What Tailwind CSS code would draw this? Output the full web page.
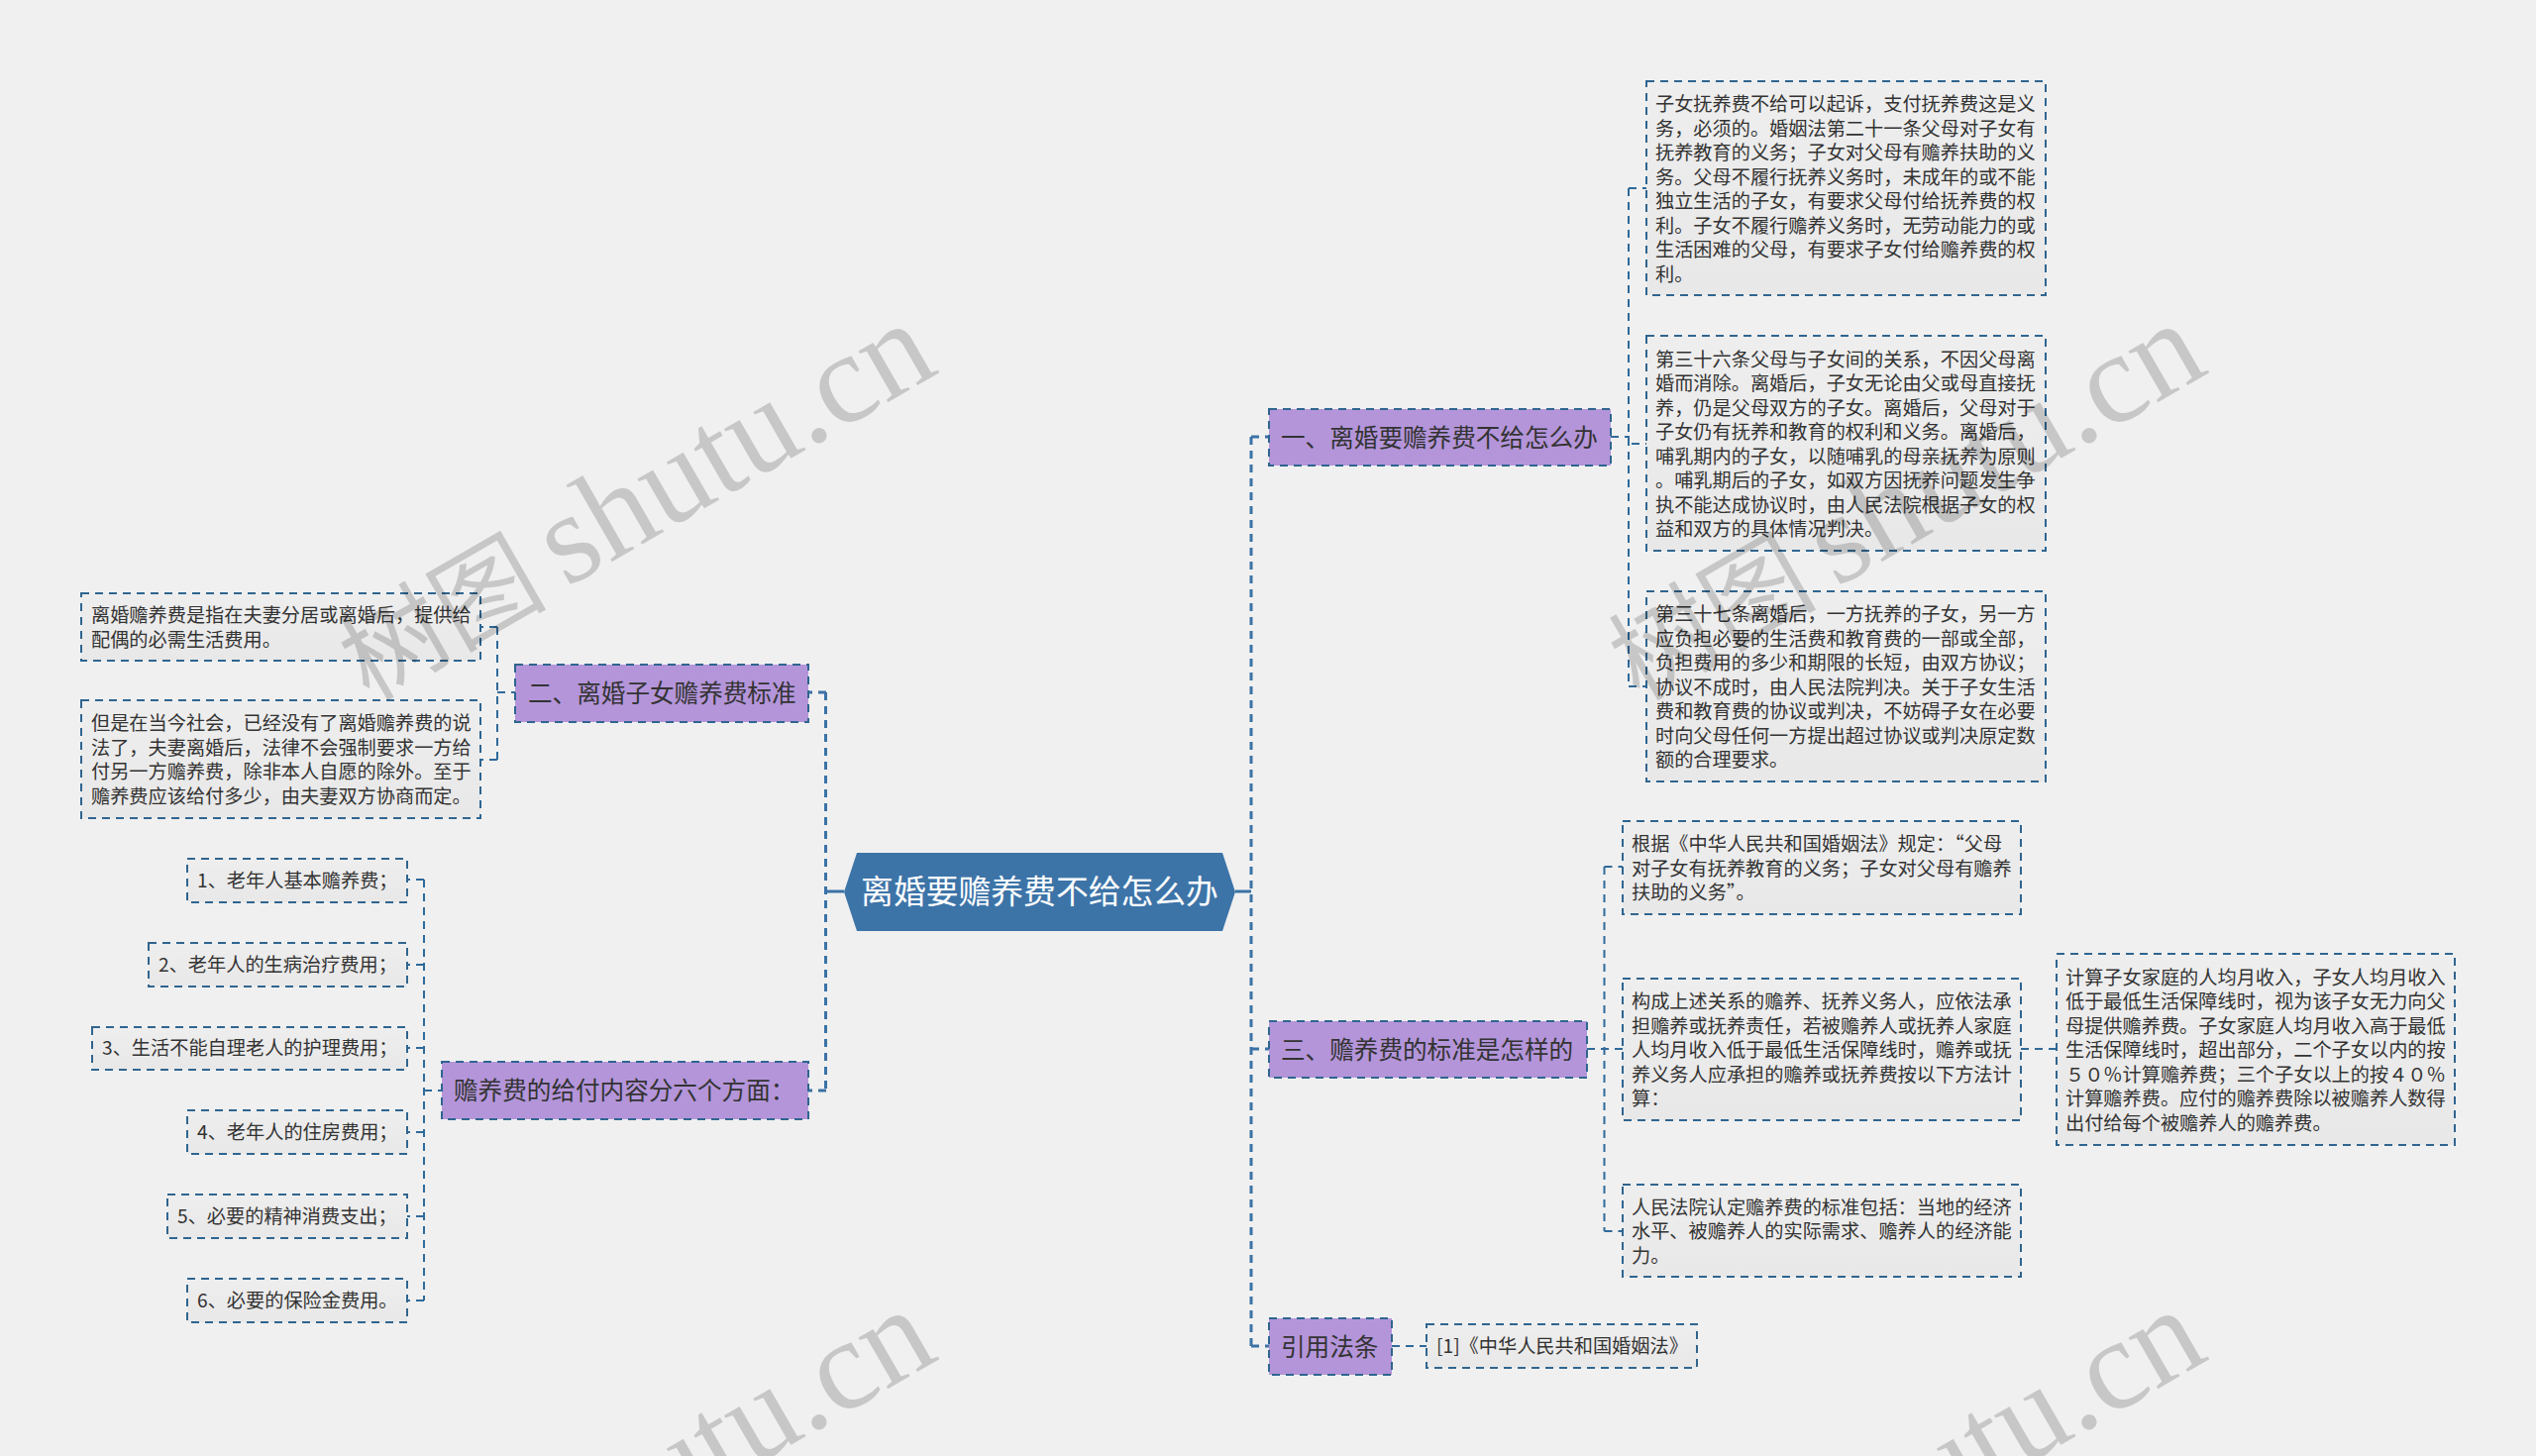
<!DOCTYPE html>
<html lang="zh-CN">
<head>
    <meta charset="UTF-8">
    <title>离婚要赡养费不给怎么办</title>
    <script src="https://cdn.jsdelivr.net/npm/@tailwindcss/browser@4"></script>
</head>
<body class="bg-[#f0f0f0] overflow-hidden">
<div class="relative w-[2560px] h-[1470px] overflow-hidden font-['Noto_Sans_CJK_SC',sans-serif] text-[#333]">

    <!-- center -->
    <div class="absolute left-[852px] top-[861px] w-[395px] h-[79px] flex items-center justify-center pb-[5px] bg-[#3d74a8] text-white text-[32.8px] [clip-path:polygon(13px_0,382px_0,395px_50%,382px_100%,13px_100%,0_50%)]">离婚要赡养费不给怎么办</div>

    <!-- branches -->
    <div class="absolute left-[1281px] top-[413px] w-[345px] h-[57px] flex items-center pl-[12px] pb-[3px] whitespace-nowrap bg-[#b495da] text-[24.6px]">一、离婚要赡养费不给怎么办</div>
    <div class="absolute left-[1281px] top-[1031px] w-[321px] h-[57px] flex items-center pl-[12px] pb-[3px] whitespace-nowrap bg-[#b495da] text-[24.6px]">三、赡养费的标准是怎样的</div>
    <div class="absolute left-[1281px] top-[1331px] w-[124px] h-[57px] flex items-center pl-[12px] pb-[3px] whitespace-nowrap bg-[#b495da] text-[24.6px]">引用法条</div>
    <div class="absolute left-[520px] top-[671px] w-[296px] h-[58px] flex items-center pl-[13px] pb-[3px] whitespace-nowrap bg-[#b495da] text-[24.6px]">二、离婚子女赡养费标准</div>
    <div class="absolute left-[446px] top-[1072px] w-[370px] h-[58px] flex items-center pl-[12px] pb-[3px] whitespace-nowrap bg-[#b495da] text-[24.6px]">赡养费的给付内容分六个方面：</div>

    <!-- right leaves -->
    <div class="absolute left-[1662px] top-[82px] w-[403px] h-[216px] flex items-center pl-[9px] whitespace-nowrap bg-linear-to-b from-[#eeeeee] to-[#e8e8e8] text-[19.2px] leading-[24.5px]"><p>子女抚养费不给可以起诉，支付抚养费这是义<br>务，必须的。婚姻法第二十一条父母对子女有<br>抚养教育的义务；子女对父母有赡养扶助的义<br>务。父母不履行抚养义务时，未成年的或不能<br>独立生活的子女，有要求父母付给抚养费的权<br>利。子女不履行赡养义务时，无劳动能力的或<br>生活困难的父母，有要求子女付给赡养费的权<br>利。</p></div>
    <div class="absolute left-[1662px] top-[339px] w-[403px] h-[217px] flex items-center pl-[9px] whitespace-nowrap bg-linear-to-b from-[#eeeeee] to-[#e8e8e8] text-[19.2px] leading-[24.5px]"><p>第三十六条父母与子女间的关系，不因父母离<br>婚而消除。离婚后，子女无论由父或母直接抚<br>养，仍是父母双方的子女。离婚后，父母对于<br>子女仍有抚养和教育的权利和义务。离婚后，<br>哺乳期内的子女，以随哺乳的母亲抚养为原则<br>。哺乳期后的子女，如双方因抚养问题发生争<br>执不能达成协议时，由人民法院根据子女的权<br>益和双方的具体情况判决。</p></div>
    <div class="absolute left-[1662px] top-[597px] w-[403px] h-[192px] flex items-center pl-[9px] whitespace-nowrap bg-linear-to-b from-[#eeeeee] to-[#e8e8e8] text-[19.2px] leading-[24.5px]"><p>第三十七条离婚后，一方抚养的子女，另一方<br>应负担必要的生活费和教育费的一部或全部，<br>负担费用的多少和期限的长短，由双方协议；<br>协议不成时，由人民法院判决。关于子女生活<br>费和教育费的协议或判决，不妨碍子女在必要<br>时向父母任何一方提出超过协议或判决原定数<br>额的合理要求。</p></div>
    <div class="absolute left-[1638px] top-[829px] w-[402px] h-[94px] flex items-center pl-[9px] whitespace-nowrap bg-linear-to-b from-[#eeeeee] to-[#e8e8e8] text-[19.2px] leading-[24.5px]"><p>根据《中华人民共和国婚姻法》规定：“父母<br>对子女有抚养教育的义务；子女对父母有赡养<br>扶助的义务”。</p></div>
    <div class="absolute left-[1638px] top-[988px] w-[402px] h-[143px] flex items-center pl-[9px] whitespace-nowrap bg-linear-to-b from-[#eeeeee] to-[#e8e8e8] text-[19.2px] leading-[24.5px]"><p>构成上述关系的赡养、抚养义务人，应依法承<br>担赡养或抚养责任，若被赡养人或抚养人家庭<br>人均月收入低于最低生活保障线时，赡养或抚<br>养义务人应承担的赡养或抚养费按以下方法计<br>算：</p></div>
    <div class="absolute left-[1638px] top-[1196px] w-[402px] h-[93px] flex items-center pl-[9px] whitespace-nowrap bg-linear-to-b from-[#eeeeee] to-[#e8e8e8] text-[19.2px] leading-[24.5px]"><p>人民法院认定赡养费的标准包括：当地的经济<br>水平、被赡养人的实际需求、赡养人的经济能<br>力。</p></div>
    <div class="absolute left-[2076px] top-[963px] w-[402px] h-[193px] flex items-center pl-[9px] whitespace-nowrap bg-linear-to-b from-[#eeeeee] to-[#e8e8e8] text-[19.2px] leading-[24.5px]"><p>计算子女家庭的人均月收入，子女人均月收入<br>低于最低生活保障线时，视为该子女无力向父<br>母提供赡养费。子女家庭人均月收入高于最低<br>生活保障线时，超出部分，二个子女以内的按<br>５０％计算赡养费；三个子女以上的按４０％<br>计算赡养费。应付的赡养费除以被赡养人数得<br>出付给每个被赡养人的赡养费。</p></div>
    <div class="absolute left-[1440px] top-[1337px] w-[273px] h-[44px] flex items-center pl-[10px] pb-[2px] whitespace-nowrap bg-linear-to-b from-[#eeeeee] to-[#e8e8e8] text-[19.2px] leading-[24.5px]">[1]《中华人民共和国婚姻法》</div>

    <!-- left leaves -->
    <div class="absolute left-[82px] top-[599px] w-[403px] h-[68px] flex items-center pl-[10px] pb-[1px] whitespace-nowrap bg-linear-to-b from-[#eeeeee] to-[#e8e8e8] text-[19.2px] leading-[24.5px]"><p>离婚赡养费是指在夫妻分居或离婚后，提供给<br>配偶的必需生活费用。</p></div>
    <div class="absolute left-[82px] top-[707px] w-[403px] h-[119px] flex items-center pl-[10px] pb-[1px] whitespace-nowrap bg-linear-to-b from-[#eeeeee] to-[#e8e8e8] text-[19.2px] leading-[24.5px]"><p>但是在当今社会，已经没有了离婚赡养费的说<br>法了，夫妻离婚后，法律不会强制要求一方给<br>付另一方赡养费，除非本人自愿的除外。至于<br>赡养费应该给付多少，由夫妻双方协商而定。</p></div>
    <div class="absolute left-[189px] top-[867px] w-[222px] h-[44px] flex items-center pl-[10px] pb-[2px] whitespace-nowrap bg-linear-to-b from-[#eeeeee] to-[#e8e8e8] text-[19.2px]">1、老年人基本赡养费；</div>
    <div class="absolute left-[150px] top-[952px] w-[261px] h-[44px] flex items-center pl-[10px] pb-[2px] whitespace-nowrap bg-linear-to-b from-[#eeeeee] to-[#e8e8e8] text-[19.2px]">2、老年人的生病治疗费用；</div>
    <div class="absolute left-[93px] top-[1037px] w-[318px] h-[43px] flex items-center pl-[10px] pb-[2px] whitespace-nowrap bg-linear-to-b from-[#eeeeee] to-[#e8e8e8] text-[19.2px]">3、生活不能自理老人的护理费用；</div>
    <div class="absolute left-[189px] top-[1121px] w-[222px] h-[44px] flex items-center pl-[10px] pb-[2px] whitespace-nowrap bg-linear-to-b from-[#eeeeee] to-[#e8e8e8] text-[19.2px]">4、老年人的住房费用；</div>
    <div class="absolute left-[169px] top-[1206px] w-[242px] h-[44px] flex items-center pl-[10px] pb-[2px] whitespace-nowrap bg-linear-to-b from-[#eeeeee] to-[#e8e8e8] text-[19.2px]">5、必要的精神消费支出；</div>
    <div class="absolute left-[189px] top-[1291px] w-[222px] h-[44px] flex items-center pl-[10px] pb-[2px] whitespace-nowrap bg-linear-to-b from-[#eeeeee] to-[#e8e8e8] text-[19.2px]">6、必要的保险金费用。</div>

    <!-- connectors and dashed outlines -->
    <svg class="absolute left-0 top-0 w-[2560px] h-[1470px]" viewBox="0 0 2560 1470" fill="none">
        <g stroke="#3a72a5" stroke-width="3">
            <path d="M1247 900H1263M852 900H834"/>
            <path stroke-dasharray="8 6" d="M1263 441V1359M833.5 699V1101"/>
            <path stroke-dasharray="8 6" d="M1263 441H1281M1263 1059H1281M1263 1359H1281M834 699H815M834 1101H816"/>
        </g>
        <g stroke="#2f6a9a" stroke-width="2">
            <path stroke-dasharray="8 6" d="M1644 190V693M1619.5 875V1243M502 633V767M428 888V1313"/>
            <path stroke-dasharray="8 6" d="M1644 190H1662M1626 441H1644V448H1662M1644 693H1662M1619.5 875H1638M1602 1059H1638M1619.5 1243H1638M2040 1059H2076M1405 1359H1440M502 633H485M502 767H485M502 699H520M428 888H411M428 974H411M428 1058H411M428 1143H411M428 1228H411M428 1313H411M428 1101H446"/>
        </g>
        <g stroke="#2f6590" stroke-width="2" stroke-dasharray="8 6">
            <rect x="1281" y="413" width="345" height="57"/>
            <rect x="1281" y="1031" width="321" height="57"/>
            <rect x="1281" y="1331" width="124" height="57"/>
            <rect x="520" y="671" width="296" height="58"/>
            <rect x="446" y="1072" width="370" height="58"/>
            <rect x="1662" y="82" width="403" height="216"/>
            <rect x="1662" y="339" width="403" height="217"/>
            <rect x="1662" y="597" width="403" height="192"/>
            <rect x="1638" y="829" width="402" height="94"/>
            <rect x="1638" y="988" width="402" height="143"/>
            <rect x="1638" y="1196" width="402" height="93"/>
            <rect x="2076" y="963" width="402" height="193"/>
            <rect x="1440" y="1337" width="273" height="44"/>
            <rect x="82" y="599" width="403" height="68"/>
            <rect x="82" y="707" width="403" height="119"/>
            <rect x="189" y="867" width="222" height="44"/>
            <rect x="150" y="952" width="261" height="44"/>
            <rect x="93" y="1037" width="318" height="43"/>
            <rect x="189" y="1121" width="222" height="44"/>
            <rect x="169" y="1206" width="242" height="44"/>
            <rect x="189" y="1291" width="222" height="44"/>
        </g>
    </svg>

    <!-- watermark, repeats across the canvas -->
    <div class="absolute left-[383px] top-[597px] origin-bottom-left -rotate-30 whitespace-nowrap leading-none text-[130px] text-black/[0.17] font-['Liberation_Serif','Noto_Sans_CJK_SC',serif] pointer-events-none"><span class="text-[105px] mr-[20px]">树图</span>shutu.cn</div>
    <div class="absolute left-[1665px] top-[597px] origin-bottom-left -rotate-30 whitespace-nowrap leading-none text-[130px] text-black/[0.17] font-['Liberation_Serif','Noto_Sans_CJK_SC',serif] pointer-events-none"><span class="text-[105px] mr-[20px]">树图</span>shutu.cn</div>
    <div class="absolute left-[383px] top-[1593px] origin-bottom-left -rotate-30 whitespace-nowrap leading-none text-[130px] text-black/[0.17] font-['Liberation_Serif','Noto_Sans_CJK_SC',serif] pointer-events-none"><span class="text-[105px] mr-[20px]">树图</span>shutu.cn</div>
    <div class="absolute left-[1665px] top-[1593px] origin-bottom-left -rotate-30 whitespace-nowrap leading-none text-[130px] text-black/[0.17] font-['Liberation_Serif','Noto_Sans_CJK_SC',serif] pointer-events-none"><span class="text-[105px] mr-[20px]">树图</span>shutu.cn</div>
</div>
</body>
</html>
